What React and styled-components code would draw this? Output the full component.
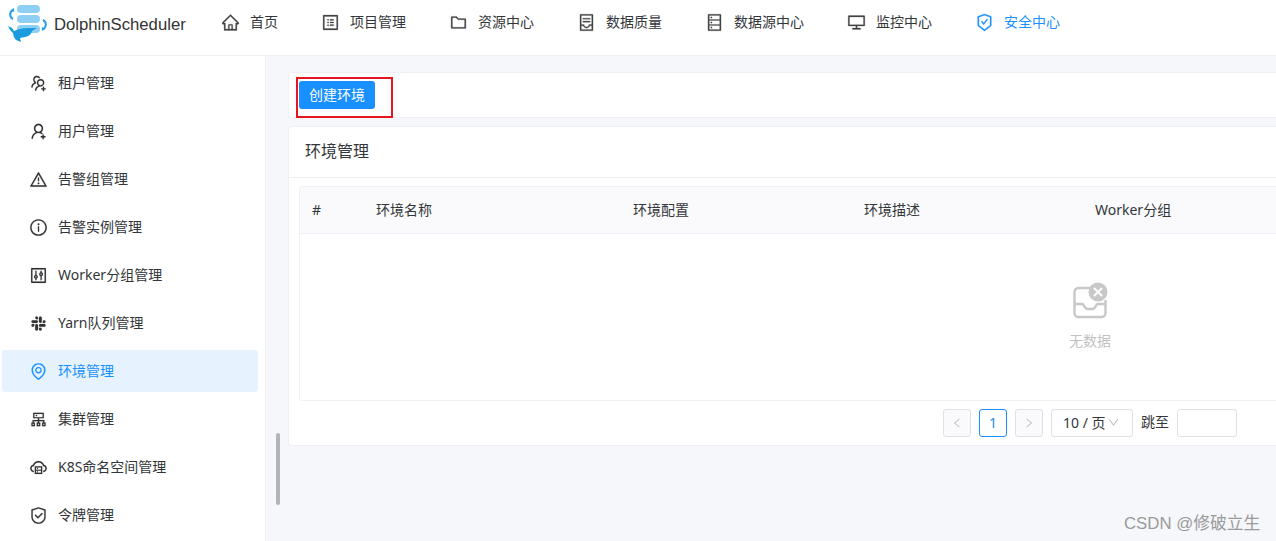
import React from "react";
import styled, { createGlobalStyle } from "styled-components";
import {
  AiOutlineHome, AiOutlineProfile, AiOutlineFolder, AiOutlineContainer, AiOutlineDatabase,
  AiOutlineDesktop, AiOutlineSafetyCertificate, AiOutlineUsergroupAdd, AiOutlineUserAdd,
  AiOutlineWarning, AiOutlineInfoCircle, AiOutlineControl, AiOutlineSlack, AiOutlineEnvironment,
  AiOutlineCluster, AiOutlineCloudServer, AiOutlineSafety, AiOutlineLeft, AiOutlineRight, AiOutlineDown,
} from "react-icons/ai";

const FONT = `"Noto Sans", "Noto Sans CJK SC", sans-serif`;
const BLUE = "#1890ff";

const Global = createGlobalStyle`
  html, body { margin: 0; padding: 0; height: 541px; overflow: hidden; background: #f6f7fb; }
  body { font-family: ${FONT}; font-size: 14px; color: #333639; }
  * { box-sizing: border-box; }
`;

const Page = styled.div`
  width: 1276px; height: 541px; overflow: hidden; position: relative;
  display: flex; flex-direction: column;
`;
const Header = styled.header`
  height: 56px; flex: none; background: #fff; border-bottom: 1px solid #efeff5;
  display: flex; align-items: flex-start; padding-left: 7px;
`;
const Brand = styled.div`
  display: flex; align-items: flex-start; width: 214px; flex: none;
`;
const BrandName = styled.span`
  font-size: 16.7px; line-height: 20px; color: #333; margin: 15px 0 0 4px;
  font-family: "Liberation Sans", sans-serif;
`;
const Nav = styled.nav`
  display: flex; gap: 43px; height: 44px; align-items: center;
`;
const NavItem = styled.div`
  display: flex; align-items: center; gap: 10px; line-height: 20px;
  color: ${p => (p.$active ? BLUE : "#333639")};
  svg {
    font-size: 19px; flex: none; color: ${p => (p.$active ? BLUE : "#444")};
    stroke: currentColor; stroke-width: 14;
  }
`;
const Body = styled.div`
  flex: 1; display: flex; min-height: 0;
`;
const Sidebar = styled.aside`
  width: 266px; flex: none; background: #fff; border-right: 1px solid #efeff5;
  padding: 6px 7px 0 2px; display: flex; flex-direction: column; gap: 6px; overflow: hidden;
`;
const MenuItem = styled.div`
  height: 42px; flex: none; border-radius: 3px; display: flex; align-items: center;
  padding: 0 0 0 27px; gap: 10px; line-height: 20px;
  background: ${p => (p.$active ? "#e6f3ff" : "transparent")};
  color: ${p => (p.$active ? BLUE : "#333639")};
  svg {
    font-size: 19px; flex: none; color: ${p => (p.$active ? BLUE : "#333")};
    stroke: currentColor; stroke-width: 8;
  }
`;
const ScrollThumb = styled.div`
  position: absolute; left: 276px; top: 433px; width: 4px; height: 72px;
  background: #b4b4b4; border-radius: 2px;
`;
const Main = styled.main`
  padding: 16px 0 0 22px; flex: none; display: flex; flex-direction: column; gap: 8px;
  width: 1627px;
`;
const Card = styled.section`
  background: #fff; border: 1px solid #efeff5; border-radius: 3px;
`;
const ToolCard = styled(Card)`
  height: 46px; padding: 8px 10px; position: relative;
`;
const CreateButton = styled.button`
  width: 76px; height: 28px; border: none; border-radius: 3px; background: ${BLUE};
  color: #fff; font: 14px ${FONT}; padding: 0 0 2px; display: block;
`;
const Highlight = styled.div`
  position: absolute; left: 7px; top: 4px; width: 97px; height: 41px; border: 2px solid #e8141e;
  pointer-events: none;
`;
const CardTitle = styled.div`
  height: 51px; padding: 0 0 2px 16px; display: flex; align-items: center; line-height: 22px;
  font-size: 16px; color: #333639; border-bottom: 1px solid #efeff5;
`;
const CardBody = styled.div`
  padding: 8px 11px 8px 10px;
`;
const Table = styled.div`
  border: 1px solid #efeff5; border-radius: 3px; height: 215px; display: flex; flex-direction: column;
`;
const HeadRow = styled.div`
  height: 47px; flex: none; background: #fafafc; border-bottom: 1px solid #efeff5;
  display: grid; grid-template-columns: 64px 257px 231px 231px 1fr; align-items: center;
  padding-left: 12px; color: #333639; line-height: 20px;
`;
const Empty = styled.div`
  flex: 1; display: flex; flex-direction: column; align-items: center; padding-top: 48px;
  color: #c2c2c2;
  svg { display: block; }
`;
const EmptyText = styled.div`
  margin-top: 11px; line-height: 20px;
`;
const Pager = styled.div`
  display: flex; justify-content: center; align-items: center; gap: 8px; margin-top: 8px; height: 28px;
  line-height: 20px;
`;
const PageBtn = styled.div`
  width: 28px; height: 28px; border-radius: 3px; display: flex; align-items: center; justify-content: center;
  padding-bottom: 1px;
  border: 1px solid ${p => (p.$active ? BLUE : "#e0e0e6")};
  background: ${p => (p.$disabled ? "#fafafc" : "#fff")};
  color: ${p => (p.$active ? BLUE : "#c2c2c2")};
  svg { font-size: 12px; }
`;
const SizeSelect = styled.div`
  width: 82px; height: 28px; border: 1px solid #e0e0e6; border-radius: 3px; padding: 0 0 1px 11px;
  display: flex; align-items: center; gap: 1px; white-space: nowrap; color: #333639;
  svg { font-size: 13px; color: #c2c2c2; flex: none; }
`;
const JumpLabel = styled.span`
  padding-bottom: 2px;
`;
const JumpInput = styled.div`
  width: 60px; height: 28px; border: 1px solid #e0e0e6; border-radius: 3px; background: #fff;
`;
const Watermark = styled.div`
  position: absolute; left: 1124px; top: 513px; font-size: 16.800px; line-height: 22px; color: #9a9a9a;
  white-space: nowrap; font-family: "Liberation Sans", "Noto Sans CJK SC", sans-serif;
`;

const Logo = () => (
  <svg width="43" height="44" viewBox="0 0 43 44" style={{ flex: "none" }}>
    <rect x="10" y="5" width="23" height="8" rx="4" fill="#8ed0f4" />
    <rect x="10" y="15" width="23" height="8" rx="4" fill="#8ed0f4" />
    <rect x="10" y="25" width="23" height="8" rx="4" fill="#8ed0f4" />
    <path d="M6 10 a5 5 0 0 0 0 9" fill="none" stroke="#2aa0e6" strokeWidth="2" />
    <path d="M3.600 10 l3.500 -2 v4z" fill="#2aa0e6" />
    <path d="M36 20 a5 5 0 0 1 0 9" fill="none" stroke="#2aa0e6" strokeWidth="2" />
    <path d="M38.400 29 l-3.500 2 v-4z" fill="#2aa0e6" />
    <path d="M1 26 l4 2 l2 3 q6 -3 14 -3 l9 0 l-5 3 q-1 5 -7 6 l-5 1 l1 4 l-5 -2 q-3 -3 -3 -7 l-3 -3z" fill="#1b9be0" />
  </svg>
);

const EmptyIcon = () => (
  <svg width="36" height="38" viewBox="0 0 36 38">
    <path d="M2.500 13 v-3 a4 4 0 0 1 4 -4 h12 M33.500 18 v13 a4 4 0 0 1 -4 4 h-23 a4 4 0 0 1 -4 -4 v-18" fill="none" stroke="#c8c8c8" strokeWidth="2.400" />
    <path d="M2.500 22 h8 q1 0 1.500 2 q1.500 3 4 3 h4 q2.500 0 4 -3 q.5 -2 1.500 -2 h8" fill="none" stroke="#c8c8c8" strokeWidth="2.400" />
    <circle cx="26" cy="10" r="9.500" fill="#c8c8c8" />
    <path d="M22 6 l8 8 M30 6 l-8 8" stroke="#fff" strokeWidth="2" />
  </svg>
);

const navItems = [
  [AiOutlineHome, "首页"], [AiOutlineProfile, "项目管理"], [AiOutlineFolder, "资源中心"],
  [AiOutlineContainer, "数据质量"], [AiOutlineDatabase, "数据源中心"], [AiOutlineDesktop, "监控中心"],
  [AiOutlineSafetyCertificate, "安全中心", true],
];
const menuItems = [
  [AiOutlineUsergroupAdd, "租户管理"], [AiOutlineUserAdd, "用户管理"], [AiOutlineWarning, "告警组管理"],
  [AiOutlineInfoCircle, "告警实例管理"], [AiOutlineControl, "Worker分组管理"], [AiOutlineSlack, "Yarn队列管理"],
  [AiOutlineEnvironment, "环境管理", true], [AiOutlineCluster, "集群管理"], [AiOutlineCloudServer, "K8S命名空间管理"],
  [AiOutlineSafety, "令牌管理"],
];

export default function App() {
  return (
    <Page>
      <Global />
      <Header>
        <Brand><Logo /><BrandName>DolphinScheduler</BrandName></Brand>
        <Nav>
          {navItems.map(([Icon, label, active]) => (
            <NavItem key={label} $active={active}><Icon />{label}</NavItem>
          ))}
        </Nav>
      </Header>
      <Body>
        <Sidebar>
          {menuItems.map(([Icon, label, active]) => (
            <MenuItem key={label} $active={active}><Icon />{label}</MenuItem>
          ))}
        </Sidebar>
        <Main>
          <ToolCard>
            <CreateButton>创建环境</CreateButton>
            <Highlight />
          </ToolCard>
          <Card>
            <CardTitle>环境管理</CardTitle>
            <CardBody>
              <Table>
                <HeadRow>
                  <span>#</span><span>环境名称</span><span>环境配置</span><span>环境描述</span><span>Worker分组</span>
                </HeadRow>
                <Empty><EmptyIcon /><EmptyText>无数据</EmptyText></Empty>
              </Table>
              <Pager>
                <PageBtn $disabled><AiOutlineLeft /></PageBtn>
                <PageBtn $active>1</PageBtn>
                <PageBtn $disabled><AiOutlineRight /></PageBtn>
                <SizeSelect>10 / 页<AiOutlineDown /></SizeSelect>
                <JumpLabel>跳至</JumpLabel>
                <JumpInput />
              </Pager>
            </CardBody>
          </Card>
        </Main>
      </Body>
      <ScrollThumb />
      <Watermark>CSDN @修破立生</Watermark>
    </Page>
  );
}
